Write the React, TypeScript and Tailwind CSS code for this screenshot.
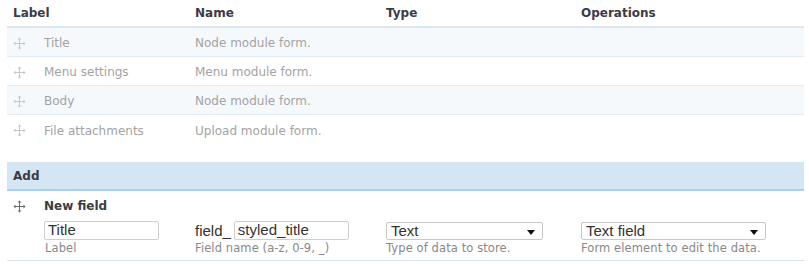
import React from "react";

const Drag = ({ dark = false }: { dark?: boolean }) => (
  <svg width="13" height="13" viewBox="0 0 13 13" className="shrink-0">
    <g stroke={dark ? "#6b6b6b" : "#c8c8c8"} strokeWidth="1" fill="none">
      <line x1="6.5" y1="1.5" x2="6.5" y2="11.5" />
      <line x1="1.5" y1="6.5" x2="11.5" y2="6.5" />
    </g>
    <g fill={dark ? "#6b6b6b" : "#c8c8c8"}>
      <path d="M6.5 0.5 L8.5 2.5 L4.5 2.5 Z" />
      <path d="M6.5 12.5 L8.5 10.5 L4.5 10.5 Z" />
      <path d="M0.5 6.5 L2.5 4.5 L2.5 8.5 Z" />
      <path d="M12.5 6.5 L10.5 4.5 L10.5 8.5 Z" />
    </g>
  </svg>
);

const rows = [
  ["Title", "Node module form."],
  ["Menu settings", "Menu module form."],
  ["Body", "Node module form."],
  ["File attachments", "Upload module form."],
];

const grid = "grid grid-cols-[188px_191px_195px_1fr]";
const arial = { fontFamily: '"Liberation Sans", Arial, sans-serif' };

const Select = ({ value, w }: { value: string; w: string }) => (
  <div
    className={`${w} h-[18px] relative border border-[#c8c8c8] rounded-[2px] bg-white flex items-center pl-[4px] text-[15px] text-[#333] leading-none`}
    style={arial}
  >
    {value}
    <svg width="8" height="5" viewBox="0 0 8 5" className="absolute right-[7px] top-[7px]">
      <path d="M0 0 L8 0 L4 5 Z" fill="#111" />
    </svg>
  </div>
);

const Desc = ({ children, className = "" }: { children: React.ReactNode; className?: string }) => (
  <div className={`text-[11.5px] text-[#888] mt-[2px] leading-[12px] tracking-[0.1px] ${className}`}>{children}</div>
);

export default function App() {
  return (
    <div
      className="w-[809px] h-[264px] bg-white pl-[7px] pr-[5px]"
      style={{ fontFamily: '"DejaVu Sans", Verdana, sans-serif' }}
    >
      <div className={`${grid} h-[28px] items-center border-b-2 border-[#dbe7f1] text-[12px] font-bold text-[#3b3b44]`}>
        <div className="pl-[6px]">Label</div>
        <div>Name</div>
        <div>Type</div>
        <div>Operations</div>
      </div>
      {rows.map((r, i) => (
        <div
          key={i}
          className={`${grid} h-[29px] items-center pt-[2px] text-[12px] text-[#a3a3a3] ${i % 2 === 0 ? "bg-[#f5f9fc]" : "bg-white"} ${i < 3 ? "border-b border-[#e4ecf3]" : ""}`}
        >
          <div className="flex items-center pl-[6px]">
            <Drag />
            <span className="ml-[18px]">{r[0]}</span>
          </div>
          <div>{r[1]}</div>
          <div />
          <div />
        </div>
      ))}
      <div className="h-[18px]" />
      <div className="h-[29px] bg-[#d4e6f3] border-b-2 border-[#a9d1ef] flex items-center pt-[1px] pl-[6px] text-[12px] font-bold text-[#3b3b44]">
        Add
      </div>
      <div className="h-[70px] border-b border-[#d6e5f0] pt-[7px]">
        <div className="flex items-center pl-[6px] h-[16px]">
          <Drag dark />
          <span className="ml-[18px] text-[12px] font-bold text-[#3b3b44]">New field</span>
        </div>
        <div className={`${grid} mt-[7px]`}>
          <div className="pl-[37px]">
            <div className="h-[19px] flex items-center">
              <input
                readOnly
                value="Title"
                className="w-[115px] h-[19px] border border-[#cfcfcf] rounded-[2px] px-[3px] text-[15px] text-[#333] outline-none"
                style={arial}
              />
            </div>
            <Desc className="pl-[1px]">Label</Desc>
          </div>
          <div>
            <div className="h-[19px] flex items-center">
              <span className="text-[15px] leading-none text-[#333] mr-[3px]" style={arial}>
                field_
              </span>
              <input
                readOnly
                value="styled_title"
                className="w-[115px] h-[19px] border border-[#cfcfcf] rounded-[2px] px-[3px] text-[15px] text-[#333] outline-none"
                style={arial}
              />
            </div>
            <Desc>Field name (a-z, 0-9, _)</Desc>
          </div>
          <div>
            <div className="h-[19px] flex items-center">
              <Select value="Text" w="w-[157px]" />
            </div>
            <Desc>Type of data to store.</Desc>
          </div>
          <div>
            <div className="h-[19px] flex items-center">
              <Select value="Text field" w="w-[185px]" />
            </div>
            <Desc>Form element to edit the data.</Desc>
          </div>
        </div>
      </div>
    </div>
  );
}
